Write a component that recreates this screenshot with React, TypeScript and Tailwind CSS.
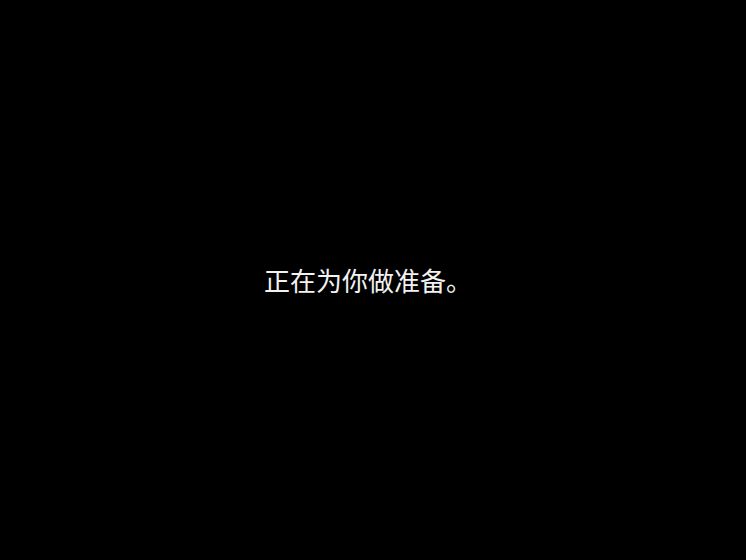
export default function App() {
  return (
    <div className="flex h-screen w-full items-center justify-center bg-black">
      <p
        className="pr-[10px] text-[26px] leading-none text-[#f2f2f2]"
        style={{ fontFamily: '"Noto Sans CJK SC", sans-serif' }}
      >
        正在为你做准备。
      </p>
    </div>
  );
}
